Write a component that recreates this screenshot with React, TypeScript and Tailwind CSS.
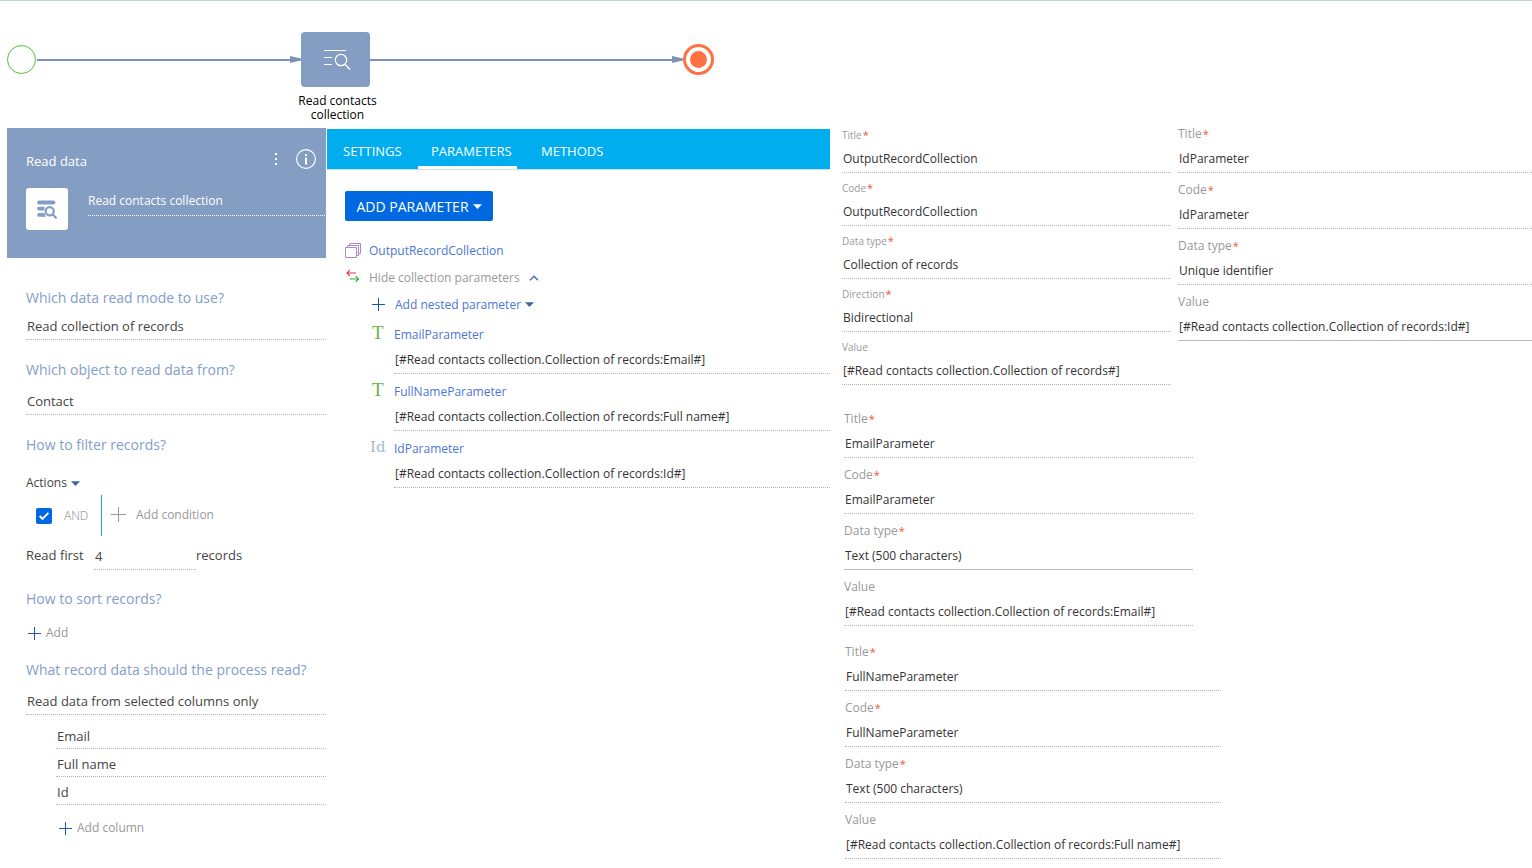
import { useId } from "react";
import type { ReactNode } from "react";

const VALUE_PREFIX = "[#Read contacts collection.Collection of records";

const inputBase =
  "block h-7 w-full min-w-0 appearance-none rounded-none border-b bg-transparent px-px outline-none";

type FieldDef = {
  label: string;
  value: string;
  required?: boolean;
  solid?: boolean;
  select?: boolean;
};

const collectionFields: FieldDef[] = [
  { label: "Title", value: "OutputRecordCollection", required: true },
  { label: "Code", value: "OutputRecordCollection", required: true },
  { label: "Data type", value: "Collection of records", required: true, select: true },
  { label: "Direction", value: "Bidirectional", required: true, select: true },
  { label: "Value", value: `${VALUE_PREFIX}#]` },
];

const idFields: FieldDef[] = [
  { label: "Title", value: "IdParameter", required: true },
  { label: "Code", value: "IdParameter", required: true },
  { label: "Data type", value: "Unique identifier", required: true, select: true },
  { label: "Value", value: `${VALUE_PREFIX}:Id#]`, solid: true },
];

const emailFields: FieldDef[] = [
  { label: "Title", value: "EmailParameter", required: true },
  { label: "Code", value: "EmailParameter", required: true },
  { label: "Data type", value: "Text (500 characters)", required: true, solid: true, select: true },
  { label: "Value", value: `${VALUE_PREFIX}:Email#]` },
];

const fullNameFields: FieldDef[] = [
  { label: "Title", value: "FullNameParameter", required: true },
  { label: "Code", value: "FullNameParameter", required: true },
  { label: "Data type", value: "Text (500 characters)", required: true, select: true },
  { label: "Value", value: `${VALUE_PREFIX}:Full name#]` },
];

const nestedParams = [
  { name: "EmailParameter", suffix: ":Email#]", kind: "text" },
  { name: "FullNameParameter", suffix: ":Full name#]", kind: "text" },
  { name: "IdParameter", suffix: ":Id#]", kind: "id" },
];

function Plus({ size, className }: { size: number; className: string }) {
  return (
    <svg width={size} height={size} viewBox="0 0 15 15" className={className} shapeRendering="crispEdges">
      <path d="M7 1h1v13h-1zM1 7h13v1h-13z" fill="currentColor" />
    </svg>
  );
}

function Caret({ className }: { className: string }) {
  return (
    <svg width="9" height="5" viewBox="0 0 9 5" className={className}>
      <path d="M0 0.3h9L4.5 4.9z" fill="currentColor" />
    </svg>
  );
}

function ReadDataIcon() {
  return (
    <svg width="28" height="22" viewBox="0 0 28 22" fill="none" stroke="#fff" strokeWidth="1">
      <path d="M1 1.5h22M1 8.5h8M1 15.5h8" />
      <circle cx="18" cy="11" r="5.7" strokeWidth="1.2" />
      <path d="M22 15.2l5 5.3" strokeWidth="1.5" />
    </svg>
  );
}

function ReadDataSolidIcon() {
  return (
    <svg width="20" height="19" viewBox="0 0 20 19" fill="none" stroke="#849dc2">
      <path d="M2 2.5h14.5" strokeWidth="3.8" strokeLinecap="round" />
      <path d="M2 8.6h3.6M2 14.8h4.2" strokeWidth="3.8" strokeLinecap="round" />
      <path d="M5.6 6.7h2.2l-1 3.8h-1.2zM6 12.9h1l2 3.8H6z" fill="#849dc2" stroke="none" />
      <circle cx="12.7" cy="11.2" r="4.1" strokeWidth="2.2" />
      <path d="M15.6 14.2l4 4.2" strokeWidth="2.2" />
    </svg>
  );
}

function Connector({ className }: { className: string }) {
  return (
    <div className={`flex h-[55px] items-center ${className}`}>
      <div className="h-0.5 flex-1 bg-[#7b92b6]" />
      <svg width="11" height="7" viewBox="0 0 11 7">
        <path d="M0 0L11 2.5V4.5L0 7z" fill="#7b92b6" />
      </svg>
    </div>
  );
}

function Diagram() {
  return (
    <div className="flex h-[127px] items-start pt-[31px] pl-[7px]">
      <div className="flex h-[55px] items-center">
        <div className="size-[29px] rounded-full border border-[#4fbf3c]" />
      </div>
      <Connector className="ml-px w-[264px]" />
      <div className="flex w-[69px] flex-col items-center">
        <div className="flex h-[55px] w-full items-center justify-center rounded-[4px] bg-[#849dc2] pl-0.5">
          <ReadDataIcon />
        </div>
        <p className="mt-[7px] ml-1 w-24 text-center text-[12px] leading-[14px] text-black">
          Read contacts collection
        </p>
      </div>
      <Connector className="w-[313px]" />
      <div className="flex h-[55px] items-center">
        <div className="flex size-[31px] items-center justify-center rounded-full border-3 border-[#ff7043]">
          <div className="size-[17px] rounded-full bg-[#ff7043]" />
        </div>
      </div>
    </div>
  );
}

function Field({ field, small }: { field: FieldDef; small?: boolean }) {
  const id = useId();
  const line = field.solid ? "border-solid border-[#bcbcbc]" : "border-dotted border-[#b5b5b5]";
  const gap = small ? "mt-[3px]" : "mt-[5px]";
  return (
    <div>
      <label
        htmlFor={id}
        className={`flex items-center text-[#999] ${small ? "h-3.5 text-[10px]" : "h-3 text-[12px]"}`}
      >
        {field.label}
        {field.required && <span className="ml-px text-[11px] text-[#f2543d]">*</span>}
      </label>
      {field.select ? (
        <select id={id} className={`${inputBase} ${gap} text-[12px] text-[#333] ${line}`}>
          <option>{field.value}</option>
        </select>
      ) : (
        <input
          id={id}
          defaultValue={field.value}
          className={`${inputBase} ${gap} text-[12px] text-[#333] ${line}`}
        />
      )}
    </div>
  );
}

function FieldGroup({ fields, small, className }: { fields: FieldDef[]; small?: boolean; className?: string }) {
  return (
    <div className={`flex flex-col ${small ? "gap-2" : "gap-[11px]"} ${className ?? ""}`}>
      {fields.map((f) => (
        <Field key={f.label} field={f} small={small} />
      ))}
    </div>
  );
}

function Heading({ children, className }: { children: ReactNode; className: string }) {
  return <h3 className={`text-[14px] leading-5 text-[#849dc9] ${className}`}>{children}</h3>;
}

function LineInput({ label, value }: { label: string; value: string }) {
  return (
    <input
      aria-label={label}
      defaultValue={value}
      className={`${inputBase} border-dotted border-[#b5b5b5] pt-0.5 text-[13px] text-[#444]`}
    />
  );
}

function LineSelect({ label, value, className }: { label: string; value: string; className: string }) {
  return (
    <select
      aria-label={label}
      className={`${inputBase} border-dotted border-[#b5b5b5] pt-0.5 text-[13px] text-[#444] ${className}`}
    >
      <option>{value}</option>
    </select>
  );
}

function ReadDataPanel() {
  return (
    <section>
      <header className="h-[130px] bg-[#849dc2] pl-[19px] text-white">
        <div className="flex items-center pt-[19px] pr-[9px]">
          <h2 className="flex-1 pt-1 text-[13px] leading-5 font-medium">Read data</h2>
          <button aria-label="More" className="mr-[13px] px-1">
            <svg width="4" height="14" viewBox="0 0 4 14" fill="#fff">
              <path d="M1 1h2v2h-2zM1 6h2v2h-2zM1 11h2v2h-2z" />
            </svg>
          </button>
          <button aria-label="Info">
            <svg width="22" height="22" viewBox="0 0 22 22" fill="none" stroke="#fff">
              <circle cx="11" cy="11" r="9.4" strokeWidth="1.2" />
              <path d="M11 9.5v7M11 6v2" strokeWidth="2" />
            </svg>
          </button>
        </div>
        <div className="mt-[17px] flex">
          <div className="flex size-[42px] items-center justify-center rounded-[3px] bg-white">
            <ReadDataSolidIcon />
          </div>
          <input
            aria-label="Element title"
            defaultValue="Read contacts collection"
            className="mr-px ml-5 h-7 min-w-0 flex-1 border-b border-dotted border-white bg-transparent pb-0.5 text-[12px] font-medium outline-none"
          />
        </div>
      </header>

      <div className="pl-[19px] text-[#444]">
        <Heading className="mt-[30px]">Which data read mode to use?</Heading>
        <LineSelect label="Read mode" value="Read collection of records" className="mt-1" />

        <Heading className="mt-5">Which object to read data from?</Heading>
        <LineSelect label="Object" value="Contact" className="mt-[7px]" />

        <Heading className="mt-5">How to filter records?</Heading>
        <button className="mt-[18px] flex h-5 items-center gap-1 text-[12px]">
          Actions
          <Caret className="text-[#3f64a3]" />
        </button>
        <div className="mt-0.5 flex h-[41px] items-center">
          <label className="flex w-[75px] items-center pl-2.5 text-[12px] font-light text-[#888]">
            <span className="mr-3 grid size-4">
              <input
                type="checkbox"
                defaultChecked
                className="size-4 appearance-none rounded-[2px] bg-[#0068e1] [grid-area:1/1]"
              />
              <svg viewBox="0 0 16 16" className="pointer-events-none size-4 [grid-area:1/1]" fill="none" stroke="#fff" strokeWidth="2">
                <path d="M3.7 8l2.8 2.9 5.9-6" />
              </svg>
            </span>
            AND
          </label>
          <div className="h-full w-px bg-[#1a9fd0]" />
          <button className="ml-2 flex items-center gap-[9px] pb-0.5 text-[12px] text-[#999]">
            <Plus size={17} className="text-[#999]" />
            Add condition
          </button>
        </div>
        <div className="mt-[5px] flex h-7 items-center pt-0.5 text-[13px]">
          <label htmlFor="read-count" className="w-[68px]">
            Read first
          </label>
          <input
            id="read-count"
            defaultValue="4"
            className="h-7 w-[102px] border-b border-dotted border-[#b5b5b5] px-px outline-none"
          />
          <span>records</span>
        </div>

        <Heading className="mt-5">How to sort records?</Heading>
        <button className="mt-3.5 ml-px flex h-5 items-center gap-1 text-[12px] text-[#999]">
          <Plus size={15} className="text-[#1f55b5]" />
          Add
        </button>

        <Heading className="mt-[17px]">What record data should the process read?</Heading>
        <LineSelect label="Columns mode" value="Read data from selected columns only" className="mt-[7px]" />
        <div className="mt-1.5 pl-[30px]">
          {["Email", "Full name", "Id"].map((c) => (
            <LineInput key={c} label="Column" value={c} />
          ))}
          <button className="mt-[13px] ml-0.5 flex h-5 items-center gap-1 text-[12px] text-[#999]">
            <Plus size={15} className="text-[#1f55b5]" />
            Add column
          </button>
        </div>
      </div>
    </section>
  );
}

function ParametersPanel() {
  return (
    <section className="pt-px">
      <nav className="flex h-[41px] border-b border-[#c9e3ee] bg-[#00aeef] text-[13px] text-white">
        <button className="w-[91px] pt-[5px] pl-4 text-left">SETTINGS</button>
        <button className="w-[99px] border-b-3 border-white pt-2 pl-[13px] text-left">PARAMETERS</button>
        <button className="pt-[5px] pl-6">METHODS</button>
      </nav>

      <div className="pl-[18px] text-[12px] text-[#4a76d4]">
        <button className="mt-[21px] flex h-[30px] w-[148px] items-center justify-center gap-1 rounded-[2px] bg-[#0068e1] text-[14px] text-white">
          ADD PARAMETER
          <Caret className="text-white" />
        </button>

        <div className="mt-4 flex h-[27px] items-center">
          <svg width="16" height="15" viewBox="0 0 16 15" fill="none" stroke="#b088c9" className="mr-2">
            <path d="M0.5 4.5h11v10h-11zM2.5 4.5v-2h11v10h-2M4.5 2.5v-2h11v10h-2" />
          </svg>
          <a href="#output">OutputRecordCollection</a>
        </div>
        <button className="flex h-[27px] items-center text-[#999]">
          <svg width="16" height="19" viewBox="0 0 16 19" fill="none" className="mr-2">
            <path d="M4.8 2.2L2 5l2.8 2.8M2 5h9" stroke="#dc3545" strokeWidth="1.2" />
            <path d="M10.7 8.2L13.5 11l-2.8 2.8M13.5 11H5" stroke="#2fae2f" strokeWidth="1.2" />
          </svg>
          Hide collection parameters
          <svg width="10" height="6" viewBox="0 0 10 6" fill="none" stroke="#3f6fbf" strokeWidth="1.4" className="ml-[9px]">
            <path d="M1 5.2L5 1.2l4 4" />
          </svg>
        </button>
        <button className="ml-[26px] flex h-[27px] items-center">
          <Plus size={15} className="mr-[9px] text-[#1f55b5]" />
          Add nested parameter
          <Caret className="ml-1 text-[#3f64a3]" />
        </button>

        <div className="mt-[7px] flex flex-col gap-2">
          {nestedParams.map((p) => (
            <div key={p.name} className="flex">
              {p.kind === "text" ? (
                <span className="w-[49px] pl-[27px] font-['Liberation_Serif',serif] text-[19px] leading-4 text-[#6cb33f]">
                  T
                </span>
              ) : (
                <span className="w-[49px] pl-[25px] font-['DejaVu_Serif',serif] text-[15px] leading-4 text-[#9fbcd2]">
                  Id
                </span>
              )}
              <div className="min-w-0 flex-1">
                <a href={`#${p.name}`} className="block leading-5">
                  {p.name}
                </a>
                <input
                  aria-label={`${p.name} value`}
                  defaultValue={VALUE_PREFIX + p.suffix}
                  className={`${inputBase} mt-px border-dotted border-[#b5b5b5] text-[#333]`}
                />
              </div>
            </div>
          ))}
        </div>
      </div>
    </section>
  );
}

export default function App() {
  return (
    <main className="min-h-screen border-t border-[#c5d0e3] bg-white pb-2 font-['Open_Sans',sans-serif]">
      <Diagram />
      <div className="grid grid-cols-[319px_503fr_701fr] gap-px pl-[7px]">
        <ReadDataPanel />
        <ParametersPanel />
        <section className="pl-[11px]">
          <div className="grid grid-cols-[329fr_354fr] gap-[7px]">
            <FieldGroup fields={collectionFields} small />
            <FieldGroup fields={idFields} />
          </div>
          <FieldGroup fields={emailFields} className="mt-7 ml-0.5 w-[349px]" />
          <FieldGroup fields={fullNameFields} className="mt-5 ml-[3px] w-[376px]" />
        </section>
      </div>
    </main>
  );
}
